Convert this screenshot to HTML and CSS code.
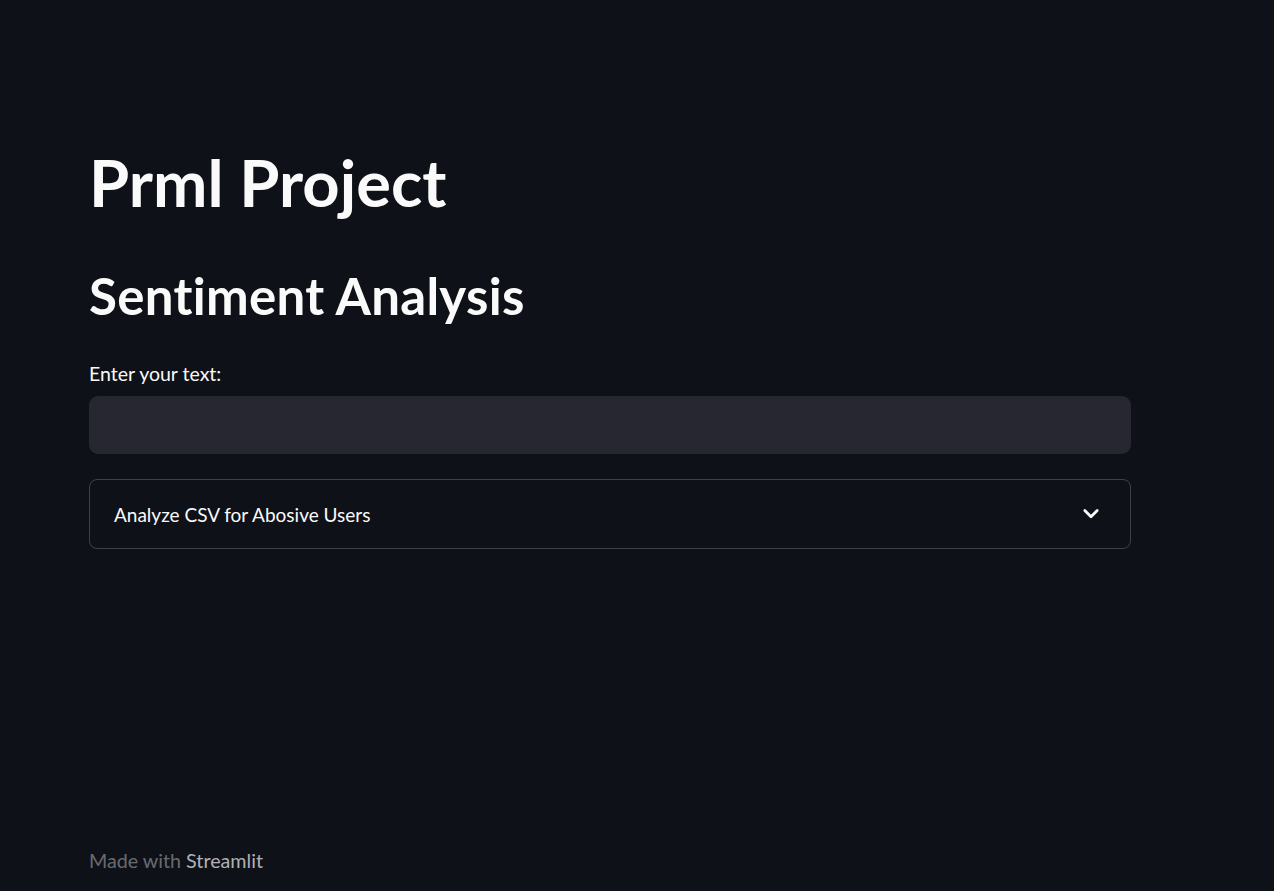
FILE: index.html
```html
<!DOCTYPE html>
<html>
<head>
<meta charset="utf-8">
<link rel="stylesheet" href="styles.css">
</head>
<body>
<div class="app">
  <main class="main">
    <h1 class="title">Prml Project</h1>
    <h2 class="subtitle">Sentiment Analysis</h2>
    <div class="field">
      <label class="label">Enter your text:</label>
      <div class="input"></div>
    </div>
    <div class="expander">
      <span class="exp-text">Analyze CSV for Abosive Users</span>
      <svg class="chevron" width="20" height="20" viewBox="0 0 20 20"><path d="M3.8 6.6 L10 12.8 L16.2 6.6" fill="none" stroke="#fafafa" stroke-width="2.8" stroke-linecap="round" stroke-linejoin="round"/></svg>
    </div>
  </main>
  <footer class="footer">Made with <span class="brand">Streamlit</span></footer>
</div>
</body>
</html>
```
FILE: styles.css
```css
* { box-sizing: border-box; }
html, body { margin: 0; padding: 0; background: #0e1117; }
body {
  font-family: "Lato", "Liberation Sans", sans-serif;
  color: #fafafa;
  width: 1274px;
  height: 891px;
  overflow: hidden;
}
.app {
  height: 891px;
  display: flex;
  flex-direction: column;
  padding: 0 143px 0 89px;
}
.main {
  flex: 1;
  display: flex;
  flex-direction: column;
  padding-top: 146px;
}
.title {
  margin: 0;
  font-size: 65px;
  font-weight: 700;
  line-height: 72px;
  letter-spacing: 0;
}
.subtitle {
  margin: 48px 0 0 0;
  font-size: 51px;
  font-weight: 700;
  line-height: 60px;
  letter-spacing: 0.3px;
}
.field {
  margin-top: 35px;
  display: flex;
  flex-direction: column;
}
.label {
  font-size: 19.5px;
  line-height: 26px;
}
.input {
  margin-top: 9px;
  height: 58px;
  background: #262730;
  border-radius: 9px;
}
.expander {
  margin-top: 25px;
  height: 70px;
  border: 1px solid rgba(250, 250, 250, 0.2);
  border-radius: 8px;
  display: flex;
  align-items: center;
  justify-content: space-between;
  padding: 0 29px 0 24px;
}
.exp-text {
  font-size: 19px;
}
.chevron { display: block; }
.footer {
  height: 42px;
  font-size: 19.7px;
  line-height: 24px;
  color: rgba(250, 250, 250, 0.4);
}
.brand { color: rgba(250, 250, 250, 0.7); }
```
